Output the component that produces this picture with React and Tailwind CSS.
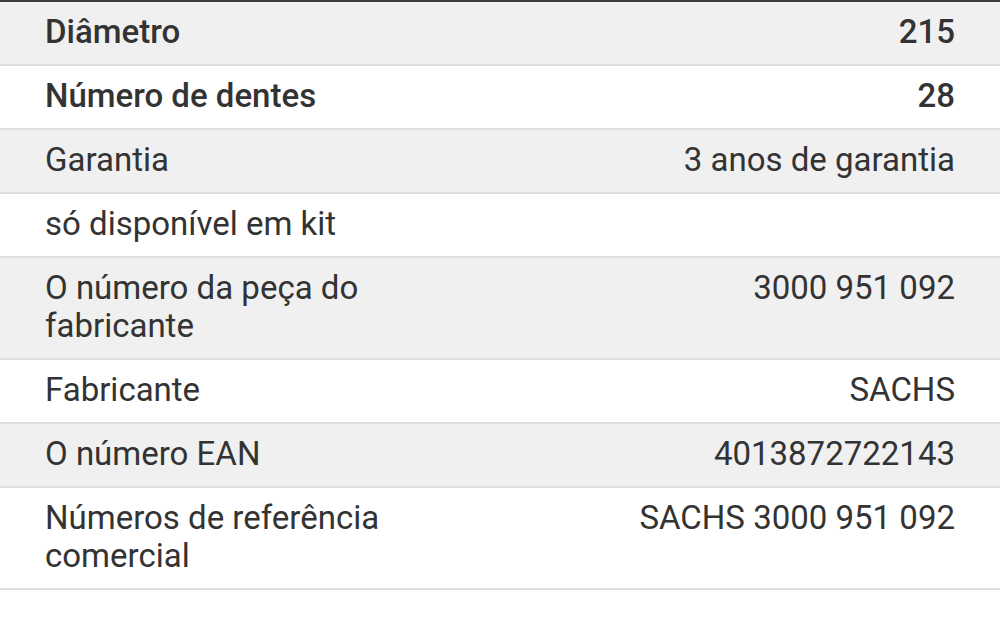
import React from "react";

const rows = [
  { label: "Diâmetro", value: "215", strong: true },
  { label: "Número de dentes", value: "28", strong: true },
  { label: "Garantia", value: "3 anos de garantia" },
  { label: "só disponível em kit", value: "" },
  { label: "O número da peça do fabricante", value: "3000 951 092" },
  { label: "Fabricante", value: "SACHS" },
  { label: "O número EAN", value: "4013872722143" },
  { label: "Números de referência comercial", value: "SACHS 3000 951 092" },
];

export default function App() {
  return (
    <div className="w-[1000px] h-[644px] bg-white font-['Roboto',sans-serif] text-[33px] leading-[38px] text-[#333333] overflow-hidden">
      <div className="border-t-2 border-[#3c3c3c]">
        {rows.map((row, i) => (
          <div
            key={row.label}
            className={`grid grid-cols-2 border-b-2 border-[#dedede] ${
              i % 2 === 0 ? "bg-[#f0f0f0]" : "bg-white"
            } ${row.strong ? "font-medium" : "font-normal"}`}
          >
            <div className="pl-[45px] pr-3 pt-[11px] pb-[13px]">{row.label}</div>
            <div className="pr-[45px] pl-3 pt-[11px] pb-[13px] text-right">{row.value}</div>
          </div>
        ))}
      </div>
    </div>
  );
}
